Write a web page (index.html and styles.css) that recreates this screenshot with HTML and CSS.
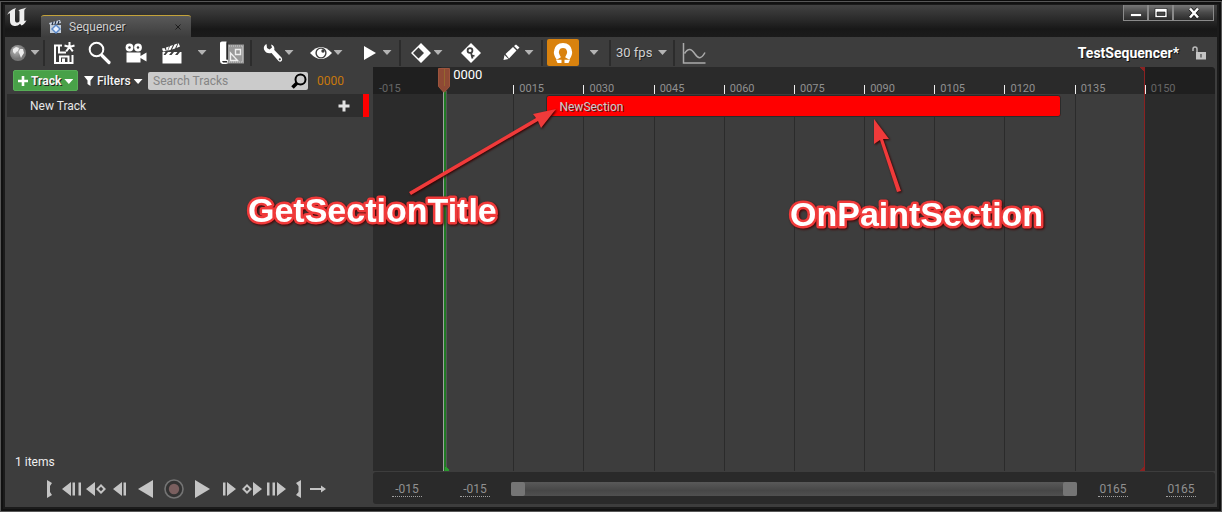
FILE: index.html
```
<!DOCTYPE html>
<html lang="en">
<head>
<meta charset="utf-8">
<title>Sequencer</title>
<link rel="stylesheet" href="styles.css">
</head>
<body>
<div class="window">
  <header class="titlebar">
    <svg class="logo" viewBox="0 0 20 20" aria-label="Unreal"><path d="M0 8C2 4 5 2 9 1L8 3V13C8 15 9 15.600 10 15.600C11.500 15.600 12.500 15 12.500 13.500V5C12.500 4 12 3.500 11 3.600C13 2.500 15.500 1.800 19.500 0.500C18 1.800 17.300 2.500 17.300 4V13C17.300 14.200 18 14.300 19.500 13C18.500 16 16.500 17.500 14.500 18.500L13 16.800C11.500 18.500 9.500 19.300 7.500 19C4.500 18.500 3 17 3 14V7C3 5.800 2 6 0 8Z"/></svg>
    <div class="tab">
      <svg class="tab-icon" viewBox="0 0 14 14"><path fill="#c3cedb" d="M1 5h11v8H1z"/><path fill="#cfd9e6" d="M0 3L11 0l1 3L1 5z"/><path stroke="#23304a" stroke-width="1.200" d="M3 5l1-3M6 4l1-3M9 4l1-3"/><path fill="#5a88c8" d="M7 4l5 5-5 5-5-5z"/><path fill="#e7f0ff" d="M7 6L10 9l-3 3-3-3z"/></svg>
      <span class="tab-label">Sequencer</span>
      <button class="tab-close" aria-label="Close tab"><svg viewBox="0 0 6 6"><path d="M.5.5l5 5M5.500.5l-5 5"/></svg></button>
    </div>
    <div class="window-buttons">
      <button aria-label="Minimize"><svg viewBox="0 0 14 12"><path fill="#fff" stroke="#111" stroke-width=".6" d="M1.500 6.500h11v3h-11z"/></svg></button>
      <button aria-label="Maximize"><svg viewBox="0 0 14 12"><path fill="#fff" stroke="#111" stroke-width=".6" fill-rule="evenodd" d="M1 1.500h12v9H1zM3 5v3.500h8V5z"/></svg></button>
      <button class="close" aria-label="Close"><svg viewBox="0 0 14 12"><path stroke="#111" stroke-width="4" d="M3 1.500l8 9M11 1.500l-8 9"/><path stroke="#fff" stroke-width="2.600" d="M3 1.500l8 9M11 1.500l-8 9"/></svg></button>
    </div>
  </header>

  <div class="toolbar" role="toolbar">
    <button class="combo globe" aria-label="World"><svg viewBox="0 0 18 18"><defs><radialGradient id="ball" cx=".38" cy=".35"><stop offset="0" stop-color="#b8b8b8"/><stop offset="1" stop-color="#777"/></radialGradient></defs><circle cx="9" cy="9" r="8" fill="url(#ball)"/><path fill="#ececec" d="M4 5l3-2 3 1-1 3-2 1-1 2-2-2zM11 5l3 0 1 4-2 3-1 2-1.500-4-1-2z"/></svg><i class="caret"></i></button>
    <span class="sep"></span>
    <button class="tool" aria-label="Save"><svg viewBox="0 0 24 24"><g fill="none" stroke="#fff" stroke-width="2"><path d="M10 4.500H3V22H20.500V14"/><path d="M7 5v6.500h7"/><path d="M8 22v-6.500h8.500V22"/></g><path fill="#fff" d="M10 17.500h3v4.500h-3z"/><path stroke="#fff" stroke-width="2" d="M17.500 1v5M17.500 6l5-1.500M17.500 6l3.300 4.300M17.500 6l-3.300 4.300M17.500 6l-5-1.500"/></svg></button>
    <button class="tool" aria-label="Find"><svg viewBox="0 0 24 24"><circle cx="8.500" cy="8.500" r="6.800" fill="none" stroke="#fff" stroke-width="2"/><path stroke="#fff" stroke-width="3.200" stroke-linecap="round" d="M14 14.500l7 7"/></svg></button>
    <button class="tool" aria-label="Camera"><svg viewBox="0 0 24 24" fill="#fff"><circle cx="5.500" cy="6.500" r="3.900"/><circle cx="14" cy="6.500" r="3.900"/><path d="M2.500 11.500h14v10h-14zM16.500 15l6-3.500v9l-6-3.500z"/><circle cx="5.500" cy="6.500" r="1.200" fill="#3d3d3d"/><circle cx="14" cy="6.500" r="1.200" fill="#3d3d3d"/></svg></button>
    <button class="tool" aria-label="Render"><svg viewBox="0 0 24 24" fill="#fff"><path d="M2.500 14h19v8.500h-19z"/><path d="M2 7.500L4.500 7 6 10 3 10.500zM6 6.500l3-1L7.500 9.500 6.500 10zM10 5l3-1-2.500 5-2.500.5zM14.500 3.500l3-1L15 7.500l-3 1zM18.500 2l1.500 3.500-3.500 1.500z"/><path d="M2.500 11h3l-2 3h-1zM8 11h3.500l-2.500 3H5.500zM14 11h3.500L15 14h-3.500zM20 11h1.500v3h-4z"/></svg></button>
    <button class="drop" aria-label="Render options"><i class="caret"></i></button>
    <button class="tool" aria-label="Curve asset"><svg viewBox="0 0 24 24"><path fill="#999" d="M7 3.500h17v19H7z"/><path fill="none" stroke="#ccc" stroke-dasharray="1 1" d="M9 5h13.500v16H9"/><path fill="none" stroke="#eee" stroke-width="1.400" d="M15.500 8.500h5v5h-5zM10.500 12v7.500h7z"/><path fill="#fff" d="M0 2Q0 .5 2 .5h4.500v18L8 19.500V21Q8 23 6 23H2.500Q0 22.500 0 20z"/><path fill="#292929" d="M6.500 1.500h1.500v17H6.500zM2 20h5l.5 1.500H3z"/></svg></button>
    <span class="sep"></span>
    <button class="combo" aria-label="Options"><svg viewBox="0 0 24 24"><path fill="#fff" d="M4 8.500Q3 5 6.500 3l.5 4 2.500 1.500L12 6.500 11 3.500Q15 4.500 14.300 9L21.500 16.500Q23 19 21 20.500 19.500 21 18.500 20L11.500 12Q6.500 13.500 4 8.500z"/><circle cx="19.800" cy="18.300" r="1.100" fill="#3d3d3d"/></svg><i class="caret"></i></button>
    <button class="combo" aria-label="View"><svg viewBox="0 0 24 24"><path fill="#fff" d="M1 12Q12 0 23 12 12 24 1 12z"/><circle cx="12" cy="12" r="5.600" fill="#3d3d3d"/><circle cx="12" cy="12" r="4.200" fill="#fff"/><circle cx="14" cy="10" r="1.700" fill="#3d3d3d"/></svg><i class="caret"></i></button>
    <button class="combo" aria-label="Playback"><svg viewBox="0 0 24 24"><path fill="#fff" d="M6 5l12 7L6 19z"/></svg><i class="caret"></i></button>
    <span class="sep"></span>
    <button class="combo" aria-label="Key interpolation"><svg viewBox="0 0 24 24"><path fill="#fff" fill-rule="evenodd" d="M12 2L22 12 12 22 2 12zM9.500 6.500L4 12l5.500 5.500L15 12z"/></svg><i class="caret"></i></button>
    <button class="tool key" aria-label="Auto key"><svg viewBox="0 0 24 24"><path fill="#fff" d="M12 2l10 10L12 22 2 12z"/><circle cx="11" cy="9.500" r="2.400" fill="none" stroke="#3d3d3d" stroke-width="1.800"/><path fill="none" stroke="#3d3d3d" stroke-width="1.800" d="M12 11.500l1.500 6M12.500 15.500l3-1"/></svg></button>
    <button class="combo" aria-label="Edit"><svg viewBox="0 0 24 24"><path fill="#fff" d="M3.500 19l1-5 4 4zM5.500 13L13 6l3.500 3.500-7.500 8zM14 5l2-1.500L19.500 6.500 17.500 8.500z"/></svg><i class="caret"></i></button>
    <span class="sep"></span>
    <button class="magnet" aria-label="Snapping"><svg viewBox="0 0 24 24"><path fill="none" stroke="#fff" stroke-width="5" d="M7.800 17.500C5.500 14 5 12 5.500 10C6.200 6 8.500 4.500 12 4.500S17.800 6 18.500 10C19 12 18.500 14 16.200 17.500"/><path fill="#fff" d="M5 18.800h5.500V22H6.500zM19 18.800h-5.500V22h4z"/></svg></button>
    <button class="drop snap" aria-label="Snapping options"><i class="caret"></i></button>
    <span class="sep"></span>
    <label class="fps"><select aria-label="Frame rate"><option>30 fps</option></select><i class="caret"></i></label>
    <span class="sep"></span>
    <button class="tool" aria-label="Curve editor"><svg viewBox="0 0 24 24" fill="none" stroke="#aaa" stroke-width="1.500"><path d="M1.500 2v20H23.500"/><path d="M2.500 12.500C6 7 9 7 13 13S20 17 23 11.500"/></svg></button>
    <strong class="asset">TestSequencer*</strong>
    <button class="lock" aria-label="Lock"><svg viewBox="0 0 14 14"><path fill="none" stroke="#bbb" stroke-width="1.500" d="M1 5V3Q1 1 3 1T5 3V7"/><path fill="#c4c4c4" d="M4 6h10v7.500H4z"/><path fill="#444" d="M8.400 8h1.200v3.500H8.400z"/></svg></button>
  </div>

  <main class="editor">
    <section class="outliner">
      <div class="filters">
        <button class="add-track"><svg viewBox="0 0 10 10"><path stroke="#fff" stroke-width="2.600" d="M5 0v10M0 5h10"/></svg>Track<i class="caret"></i></button>
        <button class="filter"><svg viewBox="0 0 10 10"><path fill="#fff" d="M0 0h10L6.500 4.500V10l-3-2V4.500z"/></svg>Filters<i class="caret"></i></button>
        <label class="search"><input type="text" placeholder="Search Tracks" aria-label="Search Tracks"><svg viewBox="0 0 16 16"><circle cx="9.500" cy="6.500" r="5" fill="none" stroke="#000" stroke-width="2"/><path stroke="#000" stroke-width="3.500" d="M6 10l-4.500 4.500"/></svg></label>
        <span class="frame">0000</span>
      </div>
      <div class="track">
        <span>New Track</span>
        <button aria-label="Add section"><svg viewBox="0 0 12 12"><path stroke="#e2e2e2" stroke-width="3" d="M6 .5v11M.5 6h11"/></svg></button>
      </div>
      <p class="count">1 items</p>
      <div class="transport">
        <button class="edge" aria-label="Set start"><svg viewBox="0 0 6 20"><path d="M1 1l5 3-2 3v6l2 3-5 3z"/></svg></button>
        <button class="first" aria-label="To start"><svg viewBox="0 0 20 20"><path d="M0 10l9-7v14zM10.500 3.500H13v13h-2.500zM16.500 3.500H19v13h-2.500z"/></svg></button>
        <button aria-label="Previous key"><svg viewBox="0 0 20 20"><path d="M0 10l9-7v14z"/><path d="M10 10l5-5 5 5-5 5zM12.800 10l2.200 2.200 2.200-2.200L15 7.800z" fill-rule="evenodd"/></svg></button>
        <button aria-label="Step back"><svg viewBox="0 0 20 20"><path d="M3 10l9-7v14zM13.500 3.500H16v13h-2.500z"/></svg></button>
        <button class="big" aria-label="Play reverse"><svg viewBox="0 0 20 20"><path d="M2 10l15-9v18z"/></svg></button>
        <button class="big" aria-label="Record"><svg viewBox="0 0 20 20"><circle cx="10" cy="10" r="9" fill="#333" stroke="#747474" stroke-width="1.600"/><circle cx="10" cy="10" r="5.200" fill="#7a5f5f"/></svg></button>
        <button class="big" aria-label="Play"><svg viewBox="0 0 20 20"><path d="M3 1l15 9-15 9z"/></svg></button>
        <button aria-label="Step forward"><svg viewBox="0 0 20 20"><path d="M5 3.500h2.500v13H5zM9 3l9 7-9 7z"/></svg></button>
        <button aria-label="Next key"><svg viewBox="0 0 20 20"><path d="M0 10l5-5 5 5-5 5zM2.800 10L5 12.200 7.200 10 5 7.800z" fill-rule="evenodd"/><path d="M11 3l9 7-9 7z"/></svg></button>
        <button aria-label="To end"><svg viewBox="0 0 20 20"><path d="M1 3.500h2.500v13H1zM6.500 3.500H9v13H6.500zM11 3l9 7-9 7z"/></svg></button>
        <button class="edge out" aria-label="Set end"><svg viewBox="0 0 6 20"><path d="M5 1L0 4l2.500 3v6L0 16l5 3z"/></svg></button>
        <button aria-label="Loop mode"><svg viewBox="0 0 20 20"><path d="M2 9h11V6.500L18 10l-5 3.500V11H2z"/></svg></button>
      </div>
    </section>

    <section class="timeline">
      <div class="ruler">
        <span class="outside start">-015</span><span class="zero"></span><span>0015</span><span>0030</span><span>0045</span><span>0060</span><span>0075</span><span>0090</span><span>0105</span><span>0120</span><span>0135</span><span class="outside">0150</span>
      </div>
      <div class="lanes">
        <span class="outside"></span><span></span><span></span><span></span><span></span><span></span><span></span><span></span><span></span><span></span><span></span><span class="outside"></span>
        <div class="section-bar">NewSection</div>
      </div>
      <div class="range-end"></div>
      <div class="playhead">
        <svg viewBox="0 0 14 28"><path fill="#8f4a35" stroke="#9d543d" d="M1.500 1.500h11v18L7.500 25h-1l-5-5.500z"/><path stroke="#96672f" d="M7.500 2v17"/></svg>
        <span>0000</span>
      </div>
      <div class="range">
        <input type="text" value="-015" aria-label="Working range start">
        <input type="text" value="-015" aria-label="View range start">
        <div class="scrub"><button aria-label="Range start"></button><button aria-label="Range end"></button></div>
        <input type="text" value="0165" aria-label="View range end">
        <input type="text" value="0165" aria-label="Working range end">
      </div>
    </section>
  </main>
  <svg class="notes" viewBox="0 0 1222 512">
    <g class="arrows"><path d="M409 192L536 118 533 114 556 109 541 128 538 121 411 195z"/><path d="M897 192L880 140 874 144 874 119 889 139 883 139 901 191z"/></g>
    <text x="248" y="222">GetSectionTitle</text>
    <text x="790" y="226">OnPaintSection</text>
  </svg>
</div>
</body>
</html>
```
FILE: styles.css
```
* { box-sizing: border-box; }
body {
  margin: 0;
  background: #555;
  color: #e6e6e6;
  font: 12px/16px Roboto, sans-serif;
}
button, input, select {
  margin: 0;
  padding: 0;
  border: 0;
  background: none;
  color: inherit;
  font: inherit;
}
svg { display: block; flex: none; }

.window {
  position: relative;
  display: flex;
  flex-direction: column;
  min-height: 100vh;
  padding: 4px 5px 5px;
  background: #1b1b1b;
  border: 1px solid #0c0c0c;
  border-width: 1px 0 0;
  box-shadow: inset 0 0 0 1px #575757, inset 0 0 0 3px #111;
}

.titlebar {
  display: flex;
  height: 32px;
  padding-left: 2px;
  background: linear-gradient(#424242, #2a2a2a 45%, #181818 75%, #1b1b1b);
}
.logo { width: 20px; height: 20px; margin-top: 2px; fill: #eee; }
.tab {
  display: flex;
  align-items: center;
  gap: 6px;
  width: 150px;
  height: 22px;
  margin: 10px 0 0 14px;
  padding: 0 10px 0 8px;
  background: linear-gradient(#595959, #3d3d3d);
  border-top: 1px solid #c4a33a;
  border-radius: 3px 3px 0 0;
}
.tab-icon { width: 14px; height: 14px; }
.tab-label { flex: 1; color: #d0d0d0; text-shadow: 1px 1px #222; }
.tab-close { width: 6px; height: 6px; stroke: #1c1c1c; }
.window-buttons { display: flex; height: 16px; margin: 0 3px 0 auto; }
.window-buttons button {
  display: grid;
  place-items: center;
  width: 25px;
  background: linear-gradient(#777, #4a4a4a 50%, #2b2b2b);
  border: 1px solid #8a8a8a;
  border-top: 0;
}
.window-buttons .close { width: 41px; }
.window-buttons svg { width: 14px; height: 12px; }

.toolbar {
  display: flex;
  align-items: stretch;
  height: 30px;
  padding-top: 1px;
  background: #3d3d3d;
}
.toolbar button { display: flex; align-items: center; justify-content: center; }
.toolbar svg { width: 24px; height: 24px; }
.toolbar .tool { width: 36px; }
.toolbar .combo { width: 49px; gap: 1px; }
.toolbar .globe { width: 38px; gap: 4px; }
.toolbar .globe svg { width: 18px; height: 18px; }
.toolbar .drop { width: 24px; }
.toolbar .key { width: 42px; }
.toolbar .snap { width: 30px; }
.toolbar .magnet { width: 32px; margin: 1px 0 1px 4px; background: #d9820e; border-radius: 2px; }
.sep { width: 2px; margin: 2px 0 1px; background: #2c2c2c; }
.sep + .tool { margin-left: 1px; }
.caret {
  width: 9px;
  height: 5px;
  background: #b4b4b4;
  clip-path: polygon(0 0, 100% 0, 50% 100%);
}
.fps { display: flex; align-items: center; gap: 6px; width: 62px; padding-left: 5px; }
.fps select { appearance: none; width: 36px; color: #d0d0d0; font-size: 13px; text-shadow: 1px 1px #222; }
.asset {
  margin: auto 13px auto auto;
  color: #fff;
  font-size: 14px;
  font-weight: 700;
  text-shadow: 1px 1px #111;
}
.toolbar .lock { margin-right: 11px; }
.toolbar .lock svg { width: 14px; height: 14px; }

.editor {
  display: grid;
  grid-template-columns: 368px 1fr;
  flex: 1;
  background: #3d3d3d;
}
.outliner { display: flex; flex-direction: column; }
.filters { display: flex; align-items: center; height: 27px; padding-left: 8px; }
.add-track, .filter {
  display: flex;
  align-items: center;
  gap: 3px;
  color: #f4f4f4;
  font-weight: 500;
  text-shadow: 1px 1px #222;
}
.filters button svg { width: 10px; height: 10px; }
.filters .caret { margin-top: 2px; background: #fff; }
.add-track {
  width: 65px;
  height: 21px;
  padding-left: 4px;
  background: #48a148;
  border: 1px solid #57ad57;
  border-radius: 2px;
  font-weight: 700;
}
.filter { width: 64px; margin: 0 0 0 6px; }
.search {
  display: flex;
  align-items: center;
  width: 160px;
  height: 18px;
  padding: 0 1px 0 5px;
  background: #cbcbcb;
  border-radius: 2px;
}
.search input { flex: 1; min-width: 0; color: #222; outline: 0; }
.search input::placeholder { color: #858585; opacity: 1; }
.search svg { width: 16px; height: 16px; }
.frame { margin-left: 9px; color: #c8780c; }
.track {
  display: flex;
  align-items: center;
  justify-content: space-between;
  height: 23px;
  margin: 0 4px 0 2px;
  padding: 0 13px 0 23px;
  background: #2e2e2e;
  border-right: 6px solid #f00;
}
.track svg { width: 12px; height: 12px; }
.count { margin: auto 0 3px 10px; color: #f0f0f0; }
.transport { display: flex; align-items: center; height: 32px; margin-bottom: 2px; padding-left: 37px; fill: #c4c4c4; }
.transport button { display: grid; place-items: center; width: 24px; }
.transport .edge { width: 14px; }
.transport .first { margin-left: 4px; }
.transport .out { margin-left: 4px; }
.transport .big { width: 28px; }
.transport svg { width: 20px; height: 20px; }
.transport .edge svg { width: 6px; }

.timeline {
  position: relative;
  display: flex;
  flex-direction: column;
  margin: 0 2px 3px 0;
}
.ruler, .lanes { display: grid; grid-template-columns: repeat(12, 1fr); }
.ruler {
  height: 27px;
  background: #2a2a2a;
  border-radius: 4px 4px 0 0;
  color: #909090;
  font-size: 11px;
  line-height: 11px;
}
.ruler span {
  padding: 16px 0 0 6px;
  background: linear-gradient(#eee, #eee) left bottom / 1px 9px no-repeat;
}
.ruler .outside { background-color: #1f1f1f; color: #666; border-radius: 0 4px 0 0; }
.ruler .start, .ruler .zero { background-image: none; }
.lanes { position: relative; flex: 1; }
.lanes span { border-left: 1px solid #2b2b2b; }
.lanes .outside { background: #2b2b2b; }
.section-bar {
  position: absolute;
  top: 1px;
  left: 20.6%;
  width: 61.1%;
  height: 22px;
  padding: 3px 12px 1px;
  background: #f00;
  border: 1px solid #2b2b2b;
  border-radius: 3px;
  color: #ccc;
  text-shadow: 1px 1px #611;
}
.range-end {
  position: absolute;
  top: 0;
  bottom: 33px;
  right: calc(100% / 12);
  width: 5px;
  background:
    linear-gradient(225deg, #8b2222 50%, transparent 50%) top / 5px 5px no-repeat,
    linear-gradient(315deg, #8b2222 50%, transparent 50%) bottom / 5px 5px no-repeat;
  border-right: 1px solid #8b2222;
}
.playhead {
  position: absolute;
  top: 0;
  bottom: 33px;
  left: calc(100% / 12 - 6px);
  display: flex;
  gap: 2px;
  color: #fff;
  font-size: 13px;
  background:
    linear-gradient(45deg, #2b9a2f 50%, transparent 50%) 8px 100% / 5px 5px no-repeat,
    linear-gradient(90deg, #a0a0a0 1px, #207a24 1px 3px, #555 3px) 6px 24px / 4px no-repeat;
}
.playhead svg { width: 14px; height: 28px; }
.range {
  display: flex;
  align-items: center;
  height: 32px;
  margin-top: 1px;
  padding: 2px 19px 0;
  background: #2a2a2a;
  border-radius: 3px;
  color: #909090;
}
.range input {
  width: 30px;
  height: 16px;
  border-bottom: 1px dotted #a0a0a0;
  text-align: center;
}
.range input + input { margin-left: 38px; }
.scrub {
  display: flex;
  justify-content: space-between;
  flex: 1;
  height: 14px;
  margin: 0 21px;
  background: linear-gradient(#595959, #474747 60%, #505050);
  border-radius: 2px;
}
.scrub button { width: 14px; background: #757575; border-radius: 2px; }

.notes { position: absolute; top: -1px; left: 0; width: 100%; pointer-events: none; }
.notes text {
  fill: #fff;
  stroke: #f03a3a;
  stroke-width: 5px;
  stroke-linejoin: round;
  paint-order: stroke;
  font: 700 34px "Liberation Sans", sans-serif;
  filter: drop-shadow(1px 1px 1px #400);
}
.arrows { fill: #f03a3a; filter: drop-shadow(1px 1px 1px #300); }
```
